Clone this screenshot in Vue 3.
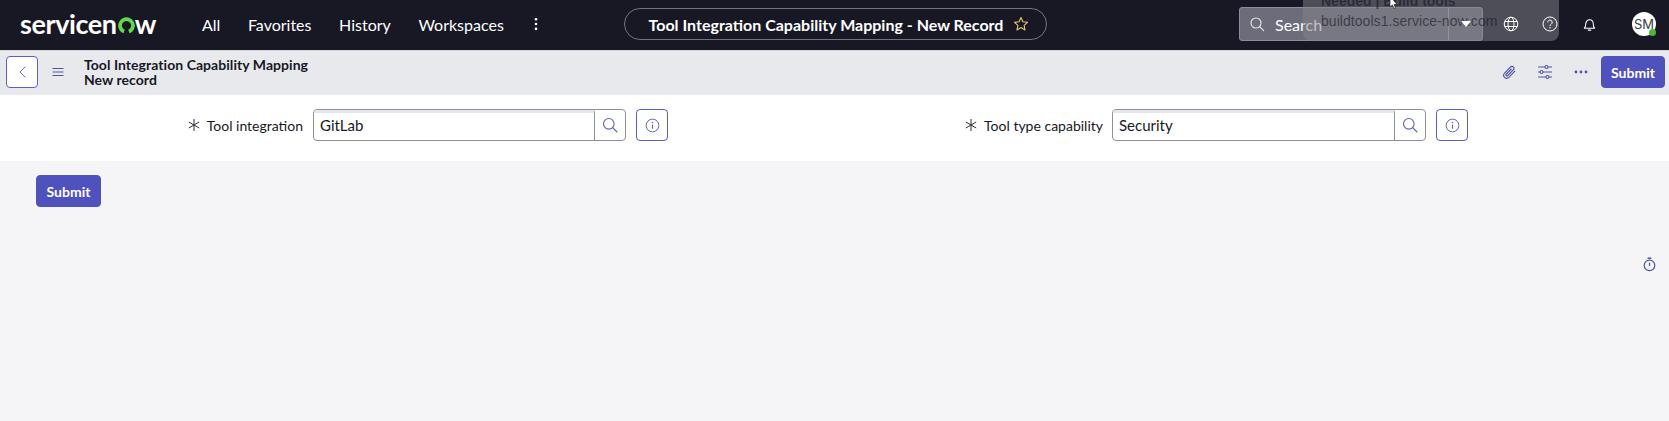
<script setup>
const navLinks = ['All', 'Favorites', 'History', 'Workspaces'];
const fields = [
  { label: 'Tool integration', value: 'GitLab' },
  { label: 'Tool type capability', value: 'Security' },
];
</script>

<template>
  <div class="page">
    <nav class="nav">
      <div class="logo">
        <span>servicen</span>
        <svg class="logo-o" viewBox="0 0 16 16" width="17" height="17">
          <path d="M5.200 15.400a7.800 7.800 0 1 1 5.600 0L9.700 12.100a4.300 4.300 0 1 0-3.400 0z" fill="#62d84e" />
        </svg>
        <span>w</span>
      </div>
      <div class="nav-links">
        <a v-for="link in navLinks" :key="link" class="nav-link">{{ link }}</a>
        <svg class="nav-more" viewBox="0 0 4 16" width="4" height="14">
          <circle cx="2" cy="2.500" r="1.500" fill="#fff" />
          <circle cx="2" cy="8" r="1.500" fill="#fff" />
          <circle cx="2" cy="13.500" r="1.500" fill="#fff" />
        </svg>
      </div>
      <div class="pill">
        <span>Tool Integration Capability Mapping - New Record</span>
        <svg viewBox="0 0 16 16" width="16" height="16">
          <path d="M8 1.600l1.900 4.200 4.600.5-3.400 3.100.9 4.500L8 11.600l-4 2.300.9-4.500L1.500 6.300l4.600-.5z" fill="none" stroke="#e8c46c" stroke-width="1.100" stroke-linejoin="round" />
        </svg>
      </div>
      <div class="search">
        <svg viewBox="0 0 16 16" width="16" height="16">
          <circle cx="7" cy="7" r="5" fill="none" stroke="#e8e8ec" stroke-width="1.100" />
          <path d="M10.700 10.700l4 4" stroke="#e8e8ec" stroke-width="1.100" stroke-linecap="round" />
        </svg>
        <span class="search-text">Search</span>
        <span class="search-arrow"><i></i></span>
      </div>
      <div class="nav-icons">
        <svg viewBox="0 0 16 16" width="16" height="16">
          <g fill="none" stroke="#fff" stroke-width="1">
            <circle cx="8" cy="8" r="6.800" />
            <ellipse cx="8" cy="8" rx="3" ry="6.800" />
            <path d="M1.800 5.500h12.400M1.800 10.500h12.400" />
          </g>
        </svg>
        <svg viewBox="0 0 16 16" width="16" height="16">
          <circle cx="8" cy="8" r="7" fill="none" stroke="#fff" stroke-width="1" />
          <path d="M5.800 6.300a2.200 2.200 0 1 1 3.400 1.800c-.8.5-1.200 1-1.200 1.800" fill="none" stroke="#fff" stroke-width="1" />
          <circle cx="8" cy="11.800" r=".7" fill="#fff" />
        </svg>
        <svg viewBox="0 0 16 16" width="15" height="15">
          <path d="M2.500 12c1.200-1 1.500-2 1.500-4.500C4 5 5.700 3 8 3s4 2 4 4.500c0 2.500.3 3.500 1.500 4.500z" fill="none" stroke="#fff" stroke-width="1.100" stroke-linejoin="round" />
          <path d="M6.700 14h2.600" stroke="#fff" stroke-width="1.100" stroke-linecap="round" />
        </svg>
        <div class="avatar">SM<i></i></div>
      </div>
      <div class="overlay">
        <div class="overlay-title">Needed | Build tools</div>
        <div class="overlay-url">buildtools1.service-now.com</div>
        <svg class="cursor" viewBox="0 0 10 12" width="10" height="12">
          <path d="M1 -4L1 7l2.500-2 1.500 3.500 1.500-.7L5 4.500h3z" fill="#fff" stroke="#222" stroke-width=".7" />
        </svg>
      </div>
    </nav>

    <header class="head">
      <button class="back">
        <svg viewBox="0 0 12 16" width="11" height="14">
          <path d="M9 2L3 8l6 6" fill="none" stroke="#5a5fc7" stroke-width="1.100" />
        </svg>
      </button>
      <svg class="menu" viewBox="0 0 12 10" width="12" height="10">
        <path d="M.5 1.500h11M.5 5h11M.5 8.500h11" stroke="#4f52a8" stroke-width="1.100" />
      </svg>
      <div class="title">
        <div>Tool Integration Capability Mapping</div>
        <div>New record</div>
      </div>
      <div class="head-actions">
        <svg viewBox="0 0 16 16" width="16" height="16">
          <path d="M13.800 7.200l-5.700 5.900c-1.400 1.400-3.400 1.400-4.600.2s-1.100-3.100.3-4.500l5.500-5.700c.9-.9 2.300-1 3.100-.2s.7 2.100-.2 3l-5.400 5.600c-.5.500-1.200.5-1.600.1s-.4-1.100.1-1.600l4.900-5" fill="none" stroke="#4f52a8" stroke-width="1.100" stroke-linecap="round" />
        </svg>
        <svg viewBox="0 0 16 16" width="16" height="16">
          <g fill="none" stroke="#4f52a8" stroke-width="1.100">
            <path d="M1 3h7M11 3h4M1 8h2M6 8h9M1 13h8M12 13h3" />
            <circle cx="9.500" cy="3" r="1.500" />
            <circle cx="4.500" cy="8" r="1.500" />
            <circle cx="10.500" cy="13" r="1.500" />
          </g>
        </svg>
        <svg viewBox="0 0 16 16" width="16" height="16">
          <circle cx="3" cy="8" r="1.400" fill="#4f52a8" />
          <circle cx="8" cy="8" r="1.400" fill="#4f52a8" />
          <circle cx="13" cy="8" r="1.400" fill="#4f52a8" />
        </svg>
        <button class="submit">Submit</button>
      </div>
    </header>

    <section class="form">
      <div v-for="f in fields" :key="f.label" class="field">
        <svg class="req" viewBox="0 0 12 12" width="12" height="12">
          <path d="M6 0v12M.8 3l10.400 6M.8 9l10.400-6" stroke="#2e2e38" stroke-width="1" />
        </svg>
        <label class="label">{{ f.label }}</label>
        <div class="lookup">
          <span class="lookup-value">{{ f.value }}</span>
          <span class="lookup-btn">
            <svg viewBox="0 0 16 16" width="16" height="16">
              <circle cx="6.800" cy="6.800" r="5.300" fill="none" stroke="#5a5fc7" stroke-width="1.100" />
              <path d="M10.700 10.700l4.300 4.300" stroke="#5a5fc7" stroke-width="1.100" stroke-linecap="round" />
            </svg>
          </span>
        </div>
        <button class="info">
          <svg viewBox="0 0 16 16" width="15" height="15">
            <circle cx="8" cy="8" r="6.800" fill="none" stroke="#5a5fc7" stroke-width="1" />
            <path d="M8 7v4.500" stroke="#5a5fc7" stroke-width="1.200" />
            <circle cx="8" cy="4.800" r=".8" fill="#5a5fc7" />
          </svg>
        </button>
      </div>
    </section>

    <div class="below">
      <button class="submit submit-low">Submit</button>
      <svg class="timer" viewBox="0 0 14 16" width="13" height="15">
        <circle cx="7" cy="9" r="5.700" fill="none" stroke="#4f52a8" stroke-width="1.300" />
        <path d="M5 1.200h4" stroke="#4f52a8" stroke-width="1.600" />
        <path d="M7 6v3.500" stroke="#4f52a8" stroke-width="1.300" />
      </svg>
    </div>
  </div>
</template>

<style>
html, body {
  margin: 0;
  background: #f5f5f8;
}
</style>

<style scoped>
.page {
  position: relative;
  width: 1669px;
  height: 421px;
  overflow: hidden;
  background: #f5f5f8;
  font-family: Lato, "Liberation Sans", sans-serif;
  color: #181825;
}
.nav {
  position: relative;
  display: flex;
  align-items: center;
  height: 50px;
  box-sizing: border-box;
  padding-bottom: 2px;
  background: #181825;
  color: #fff;
}
.logo {
  display: flex;
  align-items: center;
  margin-left: 20px;
  width: 148px;
  font-size: 27px;
  font-weight: 700;
  line-height: 1;
  letter-spacing: -0.4px;
  margin-top: -2px;
}
.logo-o {
  margin: 4px 0 0 1px;
}
.nav-links {
  display: flex;
  align-items: center;
  margin-left: 34px;
  width: 336px;
  font-size: 16px;
}
.nav-link {
  margin-right: 27.6px;
}
.nav-more {
  flex: none;
  margin-left: 3px;
}
.pill {
  display: flex;
  align-items: center;
  justify-content: center;
  gap: 10px;
  margin-left: 86px;
  width: 423px;
  height: 32px;
  box-sizing: border-box;
  padding-left: 7px;
  border: 1px solid #74747f;
  border-radius: 16px;
  font-size: 16px;
  font-weight: 700;
}
.search {
  display: flex;
  align-items: center;
  margin-left: 192px;
  width: 244px;
  height: 34px;
  box-sizing: border-box;
  padding-left: 9px;
  background: #6c6c7a;
  border: 1px solid #8e8e99;
  border-radius: 3px;
  font-size: 16px;
}
.search-text {
  margin-left: 10px;
}
.search-arrow {
  display: flex;
  align-items: center;
  justify-content: center;
  margin-left: auto;
  width: 33px;
  height: 100%;
  border-left: 1px solid #a0a0aa;
}
.search-arrow i {
  position: relative;
  z-index: 2;
  width: 0;
  height: 0;
  border-left: 5px solid transparent;
  border-right: 5px solid transparent;
  border-top: 6px solid #fff;
}
.nav-icons {
  position: relative;
  z-index: 2;
  display: flex;
  align-items: center;
  margin-left: 20px;
  gap: 23px;
}
.nav-icons svg:nth-child(3) {
  margin-left: 1px;
}
.avatar {
  position: relative;
  display: flex;
  align-items: center;
  justify-content: center;
  width: 24px;
  height: 24px;
  margin-left: 12px;
  border-radius: 50%;
  background: #fff;
  color: #3a3a45;
  font-family: Inter, sans-serif;
  font-size: 13px;
}
.avatar i {
  position: absolute;
  right: 0;
  bottom: 0;
  width: 7px;
  height: 7px;
  border-radius: 50%;
  background: #4db82e;
}
.overlay {
  position: absolute;
  top: 0;
  left: 1303px;
  width: 256px;
  height: 41px;
  background: rgba(131, 131, 140, 0.51);
  border-radius: 0 0 8px 8px;
  color: rgba(20, 20, 30, 0.62);
  font-family: "Liberation Sans", sans-serif;
  font-size: 14px;
}
.overlay-title {
  position: absolute;
  top: -7px;
  left: 18px;
  font-weight: 700;
  white-space: nowrap;
}
.overlay-url {
  position: absolute;
  top: 13px;
  left: 18px;
  white-space: nowrap;
  letter-spacing: 0.05px;
}
.cursor {
  position: absolute;
  top: 0;
  left: 86px;
}
.head {
  display: flex;
  align-items: center;
  height: 45px;
  box-sizing: border-box;
  border-top: 1px solid #d4d5da;
  padding-bottom: 2px;
  background: #e8e9ed;
  padding-left: 6px;
}
.back {
  display: flex;
  align-items: center;
  justify-content: center;
  width: 32px;
  height: 32px;
  padding: 0;
  background: #fff;
  border: 1px solid #5a5fc7;
  border-radius: 4px;
}
.menu {
  margin-left: 14px;
}
.title {
  margin-left: 20px;
  font-size: 14px;
  font-weight: 700;
  line-height: 15px;
  letter-spacing: 0.05px;
}
.head-actions {
  display: flex;
  align-items: center;
  gap: 20px;
  margin-left: auto;
  padding-right: 4px;
}
.submit {
  width: 64px;
  height: 32px;
  margin-left: -8px;
  padding: 0;
  border: 1px solid #4f52bd;
  border-radius: 4px;
  background: #4f52bd;
  color: #fff;
  font-family: inherit;
  font-size: 14px;
  font-weight: 700;
}
.submit-low {
  width: 65px;
  margin-left: 0;
}
.form {
  display: grid;
  grid-template-columns: 668px 800px;
  height: 66px;
  background: #fff;
}
.field {
  display: flex;
  align-items: center;
  justify-content: flex-end;
  padding-bottom: 6px;
  box-sizing: border-box;
}
.req {
  margin-right: 7px;
}
.label {
  margin-right: 10px;
  font-size: 14px;
}
.field:last-child .label {
  margin-right: 9px;
}
.lookup {
  display: flex;
  align-items: stretch;
  width: 313px;
  height: 32px;
  box-sizing: border-box;
  border: 1px solid #8f9099;
  border-radius: 4px;
  overflow: hidden;
}
.field:last-child .lookup {
  width: 314px;
}
.lookup-value {
  flex: 1;
  padding: 0 6px;
  font-size: 15px;
  line-height: 24px;
  border-top: 3px solid #e6e7ea;
  border-right: 1px solid #8f9099;
}
.lookup-btn {
  display: flex;
  align-items: center;
  justify-content: center;
  width: 30px;
}
.info {
  display: flex;
  align-items: center;
  justify-content: center;
  width: 32px;
  height: 32px;
  margin-left: 10px;
  padding: 0;
  background: #fff;
  border: 1px solid #5a5fc7;
  border-radius: 4px;
}
.below {
  position: relative;
  padding: 14px 0 0 36px;
}
.timer {
  position: absolute;
  top: 96px;
  left: 1643px;
}
</style>
